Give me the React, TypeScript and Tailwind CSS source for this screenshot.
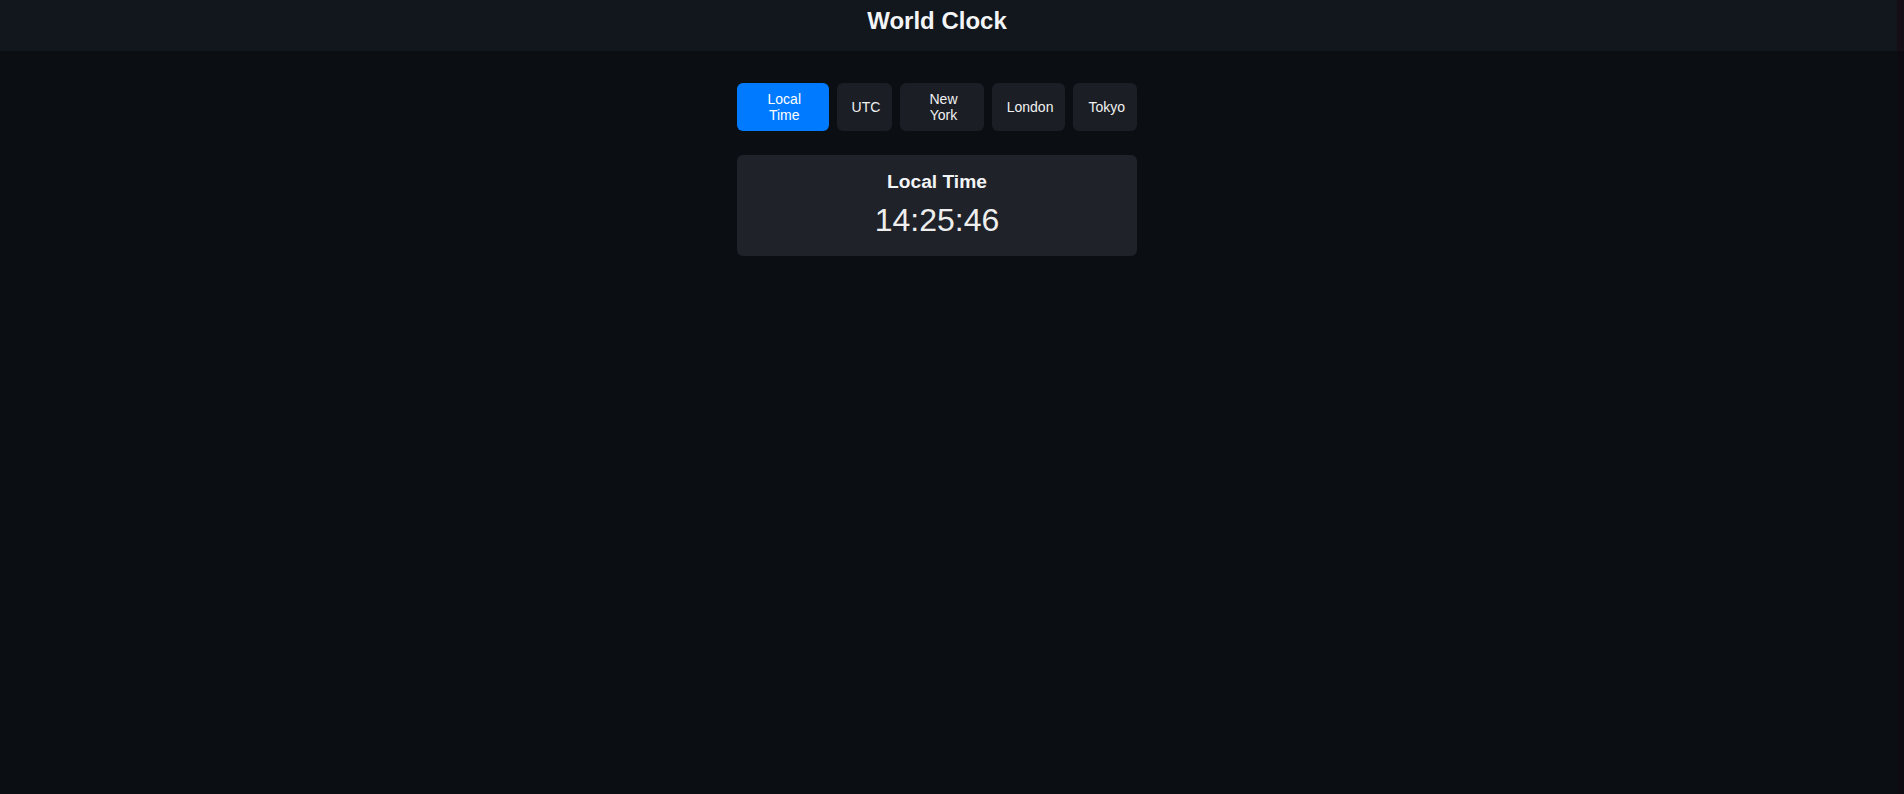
import { useState } from 'react';

export default function App() {
  const zones = [
    { label: "Local Time", time: "14:25:46" },
    { label: "UTC", time: "14:25:46" },
    { label: "New York", time: "10:25:46" },
    { label: "London", time: "15:25:46" },
    { label: "Tokyo", time: "23:25:46" }
  ];
  const [active, setActive] = useState(0);

  return (
    <div className="flex min-h-screen bg-[#0b0e13] font-['Liberation_Sans',Arial,sans-serif] text-white">
      <div className="flex-1 flex flex-col">
        {/* Header */}
        <header className="h-[51px] bg-[#12161d] pt-[7px] pr-[23px] text-center">
          <h1 className="text-[24px] font-bold leading-[normal] text-[#f3f4f6]">World Clock</h1>
        </header>

        {/* Content */}
        <main className="flex flex-col items-center pt-8 pr-[23px]">
          <div className="w-[400px]">
            <div className="flex gap-2">
              {zones.map((zone, index) => (
                <button
                  key={zone.label}
                  onClick={() => setActive(index)}
                  className={
                    index === active
                      ? "py-2 pl-[15px] pr-[12px] rounded-md bg-[#007bff] text-sm leading-[16px] text-white text-center cursor-pointer"
                      : "py-2 pl-[15px] pr-[12px] rounded-md bg-[#1b1e25] text-sm leading-[16px] text-[#f1f1f1] text-center cursor-pointer"
                  }
                >
                  {zone.label}
                </button>
              ))}
            </div>

            <div className="mt-6 pt-4 pb-[17px] px-4 rounded-md bg-[#1f2229] text-center">
              <h2 className="text-[19.2px] font-bold leading-[normal] mb-[9px] text-[#f3f4f6]">{zones[active].label}</h2>
              <div className="text-[32px] leading-[normal] text-[#eeeeee]">{zones[active].time}</div>
            </div>
          </div>
        </main>
      </div>

      {/* right edge strip */}
      <div className="w-[7px] flex flex-col">
        <div className="h-[51px] bg-[#150e14]"></div>
        <div className="flex-1 bg-[#0d0b11]"></div>
      </div>
    </div>
  );
}
